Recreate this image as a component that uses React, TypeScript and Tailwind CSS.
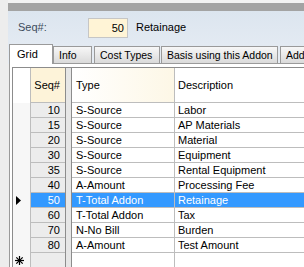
import React from 'react';

type Row = { seq: number | null; type: string; desc: string; selected?: boolean };

const ROWS: Row[] = [
  { seq: 10, type: 'S-Source', desc: 'Labor' },
  { seq: 15, type: 'S-Source', desc: 'AP Materials' },
  { seq: 20, type: 'S-Source', desc: 'Material' },
  { seq: 30, type: 'S-Source', desc: 'Equipment' },
  { seq: 35, type: 'S-Source', desc: 'Rental Equipment' },
  { seq: 40, type: 'A-Amount', desc: 'Processing Fee' },
  { seq: 50, type: 'T-Total Addon', desc: 'Retainage', selected: true },
  { seq: 60, type: 'T-Total Addon', desc: 'Tax' },
  { seq: 70, type: 'N-No Bill', desc: 'Burden' },
  { seq: 80, type: 'A-Amount', desc: 'Test Amount' },
];

const TABS = [
  { label: 'Info', w: 'w-[39px]' },
  { label: 'Cost Types', w: 'w-[66px] ml-[2px]' },
  { label: 'Basis using this Addon', w: 'w-[117px] ml-[1px]' },
  { label: 'Addon Items', w: 'w-[60px] ml-[2px]' },
];

const Splitter: React.FC = () => (
  <div className="w-[7px] shrink-0 border-x border-[#8c8c8c] bg-[#e6e6e6]" />
);

const GridRow: React.FC<{ row: Row }> = ({ row }) => {
  const sel = row.selected;
  return (
    <div className="flex h-[15px] shrink-0">
      {/* row header */}
      <div className="w-[17px] shrink-0 bg-[#f7f7f7] flex items-center pl-[3px]">
        {sel && (
          <svg width="5" height="9" viewBox="0 0 5 9">
            <path d="M0 0 L5 4.5 L0 9 Z" fill="#000" />
          </svg>
        )}
      </div>
      <div
        className={`w-[35px] shrink-0 border-l border-b border-[#bdbdbd] text-right pr-[5px] leading-[14px] ${
          sel ? 'bg-[#3399ff] text-white' : 'bg-[#ececec]'
        }`}
      >
        {row.seq}
      </div>
      <Splitter />
      <div
        className={`w-[103px] shrink-0 border-r border-b border-[#bdbdbd] pl-[4px] leading-[14px] ${
          sel ? 'bg-[#3399ff] text-white' : 'bg-white'
        }`}
      >
        {row.type}
      </div>
      <div
        className={`flex-1 border-b border-[#bdbdbd] pl-[3px] leading-[14px] whitespace-nowrap ${
          sel ? 'bg-[#3399ff] text-white' : 'bg-white'
        }`}
      >
        {row.desc}
      </div>
    </div>
  );
};

export default function App() {
  return (
    <div
      className="w-[304px] h-[267px] overflow-hidden flex bg-[#ededed] text-[11px] text-black"
      style={{ fontFamily: '"Liberation Sans", Arial, sans-serif' }}
    >
      {/* left strip */}
      <div className="w-[8px] shrink-0 bg-[#ededed]" />

      <div className="flex-1 flex flex-col min-w-0">
        <div className="h-[3px] bg-[#f2f2f2]" />
        <div className="h-[8px] bg-[#a3a3a3]" />

        {/* header panel + tabs */}
        <div className="bg-gradient-to-b from-[#dce5ef] to-[#e7edf4]">
          <div className="h-[33px] flex items-center">
            <span className="ml-[10px] w-[70px] text-[#3d4b5c]">Seq#:</span>
            <div className="w-[40px] h-[20px] border border-[#c6c6c6] bg-[#fff4d6] text-right pr-[3px] leading-[18px]">
              50
            </div>
            <span className="ml-[8px]">Retainage</span>
          </div>

          <div className="h-[20px] flex items-end whitespace-nowrap">
            <div className="ml-[1px] w-[44px] h-[20px] shrink-0 bg-white border border-b-0 border-[#9a9a9a] pl-[7px] pt-[1px]">
              Grid
            </div>
            <div className="flex-1 flex items-end border-b border-[#9a9a9a] overflow-hidden text-[10.5px]">
              {TABS.map((t) => (
                <div
                  key={t.label}
                  className={`${t.w} h-[17px] shrink-0 bg-gradient-to-b from-[#f7f7f7] to-[#dadada] border border-b-0 border-[#9a9a9a] px-[5px] leading-[16px]`}
                >
                  {t.label}
                </div>
              ))}
            </div>
          </div>
        </div>

        {/* content */}
        <div className="flex-1 ml-[1px] bg-white border-l border-[#9a9a9a] pl-[2px] pt-[3px] flex flex-col min-h-0">
          <div className="flex-1 border-l border-t border-[#8c8c8c] flex flex-col min-h-0">
            {/* header */}
            <div className="flex h-[35px] shrink-0">
              <div className="w-[17px] shrink-0 bg-white" />
              <div className="w-[35px] shrink-0 border-l border-b border-[#bdbdbd] bg-[#fdf3d9] flex items-center justify-end pr-[5px]">
                Seq#
              </div>
              <Splitter />
              <div className="w-[103px] shrink-0 border-r border-b border-[#bdbdbd] bg-gradient-to-r from-white to-[#fdf7e6] flex items-center pl-[4px]">
                Type
              </div>
              <div className="flex-1 border-b border-[#bdbdbd] bg-white flex items-center pl-[3px]">
                Description
              </div>
            </div>

            {ROWS.map((r) => (
              <GridRow key={r.seq ?? 'new'} row={r} />
            ))}

            {/* new row */}
            <div className="flex h-[15px] shrink-0">
              <div className="w-[17px] shrink-0 bg-[#f7f7f7] flex items-center pl-[2px]">
                <svg width="9" height="9" viewBox="0 0 9 9" stroke="#000" strokeWidth="1.2">
                  <line x1="4.5" y1="0" x2="4.5" y2="9" />
                  <line x1="0" y1="4.5" x2="9" y2="4.5" />
                  <line x1="1.3" y1="1.3" x2="7.7" y2="7.7" />
                  <line x1="7.7" y1="1.3" x2="1.3" y2="7.7" />
                </svg>
              </div>
              <div className="w-[35px] shrink-0 border-l border-b border-[#bdbdbd] bg-[#ececec]" />
              <Splitter />
              <div className="w-[103px] shrink-0 border-r border-b border-[#bdbdbd] bg-white" />
              <div className="flex-1 border-b border-[#bdbdbd] bg-white" />
            </div>
          </div>
        </div>
      </div>
    </div>
  );
}
